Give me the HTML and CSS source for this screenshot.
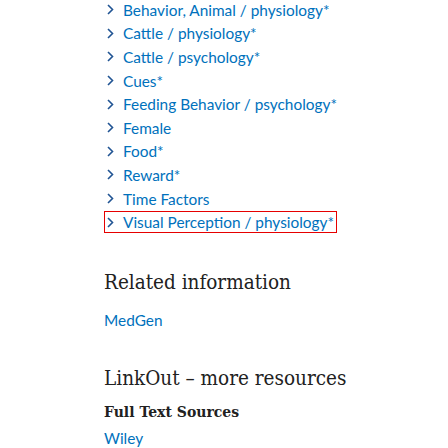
FILE: index.html
```html
<!DOCTYPE html>
<html lang="en">
<head>
<meta charset="utf-8">
<link rel="stylesheet" href="styles.css">
</head>
<body>
<main class="page">
  <ul class="terms">
    <li><button class="term"><svg class="chev" viewBox="0 0 7 11" width="7" height="11"><path d="M1 1 L5.5 5.5 L1 10" /></svg><span>Behavior, Animal / physiology*</span></button></li>
    <li><button class="term"><svg class="chev" viewBox="0 0 7 11" width="7" height="11"><path d="M1 1 L5.5 5.5 L1 10" /></svg><span>Cattle / physiology*</span></button></li>
    <li><button class="term"><svg class="chev" viewBox="0 0 7 11" width="7" height="11"><path d="M1 1 L5.5 5.5 L1 10" /></svg><span>Cattle / psychology*</span></button></li>
    <li><button class="term"><svg class="chev" viewBox="0 0 7 11" width="7" height="11"><path d="M1 1 L5.5 5.5 L1 10" /></svg><span>Cues*</span></button></li>
    <li><button class="term"><svg class="chev" viewBox="0 0 7 11" width="7" height="11"><path d="M1 1 L5.5 5.5 L1 10" /></svg><span>Feeding Behavior / psychology*</span></button></li>
    <li><button class="term"><svg class="chev" viewBox="0 0 7 11" width="7" height="11"><path d="M1 1 L5.5 5.5 L1 10" /></svg><span>Female</span></button></li>
    <li><button class="term"><svg class="chev" viewBox="0 0 7 11" width="7" height="11"><path d="M1 1 L5.5 5.5 L1 10" /></svg><span>Food*</span></button></li>
    <li><button class="term"><svg class="chev" viewBox="0 0 7 11" width="7" height="11"><path d="M1 1 L5.5 5.5 L1 10" /></svg><span>Reward*</span></button></li>
    <li><button class="term"><svg class="chev" viewBox="0 0 7 11" width="7" height="11"><path d="M1 1 L5.5 5.5 L1 10" /></svg><span>Time Factors</span></button></li>
    <li><button class="term term-focus"><svg class="chev" viewBox="0 0 7 11" width="7" height="11"><path d="M1 1 L5.5 5.5 L1 10" /></svg><span>Visual Perception / physiology*</span></button></li>
  </ul>

  <section class="related">
    <h2 class="heading">Related information</h2>
    <a class="link" href="#">MedGen</a>
  </section>

  <section class="linkout">
    <h2 class="heading">LinkOut – more resources</h2>
    <h3 class="subheading">Full Text Sources</h3>
    <a class="link" href="#">Wiley</a>
  </section>
</main>
</body>
</html>
```

FILE: styles.css
```css
html, body {
  margin: 0;
  padding: 0;
  background: #ffffff;
}

.page {
  padding-left: 104px;
  margin-top: -2px;
  font-family: Lato, "Open Sans", sans-serif;
  font-size: 15.4px;
  color: #212121;
}

.terms {
  list-style: none;
  margin: 0;
  padding: 0;
  display: flex;
  flex-direction: column;
  align-items: flex-start;
}

.terms li {
  padding: 0.8px 0;
}

.term {
  display: flex;
  align-items: center;
  gap: 9px;
  margin: 0;
  padding: 0 2px 0 2px;
  border: 1px solid transparent;
  background: none;
  font: inherit;
  line-height: 20px;
  color: #0071bc;
  cursor: pointer;
}

.term-focus {
  border-color: #e60000;
}

.chev {
  flex: none;
  fill: none;
  stroke: #205493;
  stroke-width: 1.6;
}

.related {
  margin-top: 34px;
}

.linkout {
  margin-top: 33px;
}

.heading {
  margin: 0;
  font-family: "DejaVu Serif", "Liberation Serif", serif;
  font-stretch: condensed;
  font-size: 20.5px;
  font-weight: normal;
  line-height: 28px;
  color: #212121;
}

.related .heading {
  margin-bottom: 13px;
}

.linkout .heading {
  margin-bottom: 10px;
}

.subheading {
  margin: 0 0 5px 0;
  font-family: "DejaVu Serif", "Liberation Serif", serif;
  font-size: 14px;
  font-weight: bold;
  line-height: 20px;
  color: #212121;
}

.link {
  display: block;
  width: max-content;
  line-height: 22px;
  color: #0071bc;
  text-decoration: none;
}
```
